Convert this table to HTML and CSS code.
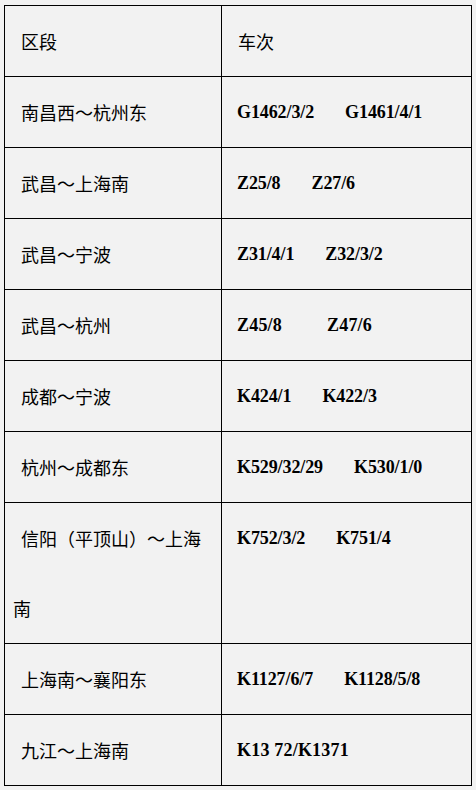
FILE: index.html
```html
<!DOCTYPE html>
<html lang="zh-CN">
<head>
<meta charset="utf-8">
<title>车次表</title>
<link rel="stylesheet" href="styles.css">
</head>
<body>
<table class="trains">
  <colgroup><col class="c1"><col class="c2"></colgroup>
  <tr><td class="seg">区段</td><td class="seg">车次</td></tr>
  <tr><td class="seg">南昌西～杭州东</td><td class="num"><span>G1462/3/2</span><span class="next">G1461/4/1</span></td></tr>
  <tr><td class="seg">武昌～上海南</td><td class="num"><span>Z25/8</span><span class="next">Z27/6</span></td></tr>
  <tr><td class="seg">武昌～宁波</td><td class="num"><span>Z31/4/1</span><span class="next">Z32/3/2</span></td></tr>
  <tr><td class="seg">武昌～杭州</td><td class="num alt"><span>Z45/8</span><span class="next wide">Z47/6</span></td></tr>
  <tr><td class="seg">成都～宁波</td><td class="num"><span>K424/1</span><span class="next">K422/3</span></td></tr>
  <tr><td class="seg">杭州～成都东</td><td class="num"><span>K529/32/29</span><span class="next">K530/1/0</span></td></tr>
  <tr><td class="seg">信阳（平顶山）～上海南</td><td class="num"><span>K752/3/2</span><span class="next">K751/4</span></td></tr>
  <tr><td class="seg">上海南～襄阳东</td><td class="num"><span>K1127/6/7</span><span class="next">K1128/5/8</span></td></tr>
  <tr><td class="seg">九江～上海南</td><td class="num alt"><span>K13 72/K1371</span></td></tr>
</table>
</body>
</html>
```
FILE: styles.css
```css
html, body {
  margin: 0;
  padding: 0;
  background: #f2f2f2;
}
body {
  padding: 5px 0 0 4px;
  color: #000;
  font-family: "Liberation Serif", "Noto Sans CJK SC", serif;
}
.trains {
  border-collapse: collapse;
  table-layout: fixed;
  width: 467px;
  background: #f2f2f2;
}
.c1 { width: 217px; }
.c2 { width: 250px; }
.trains td {
  border: 1px solid #000;
  padding: 0 8px;
  line-height: 70px;
  text-indent: 8px;
  vertical-align: top;
  font-size: 18px;
}
.seg {
  font-family: "Noto Sans CJK SC", sans-serif;
  font-weight: 400;
}
.trains td.num {
  font-family: "Liberation Serif", serif;
  font-weight: 700;
  white-space: nowrap;
  text-indent: 7px;
  letter-spacing: -0.1px;
}
.num .next { margin-left: 31px; }
.num .next.wide { margin-left: 45px; }
.trains td.num.alt { letter-spacing: 0.2px; }
```
